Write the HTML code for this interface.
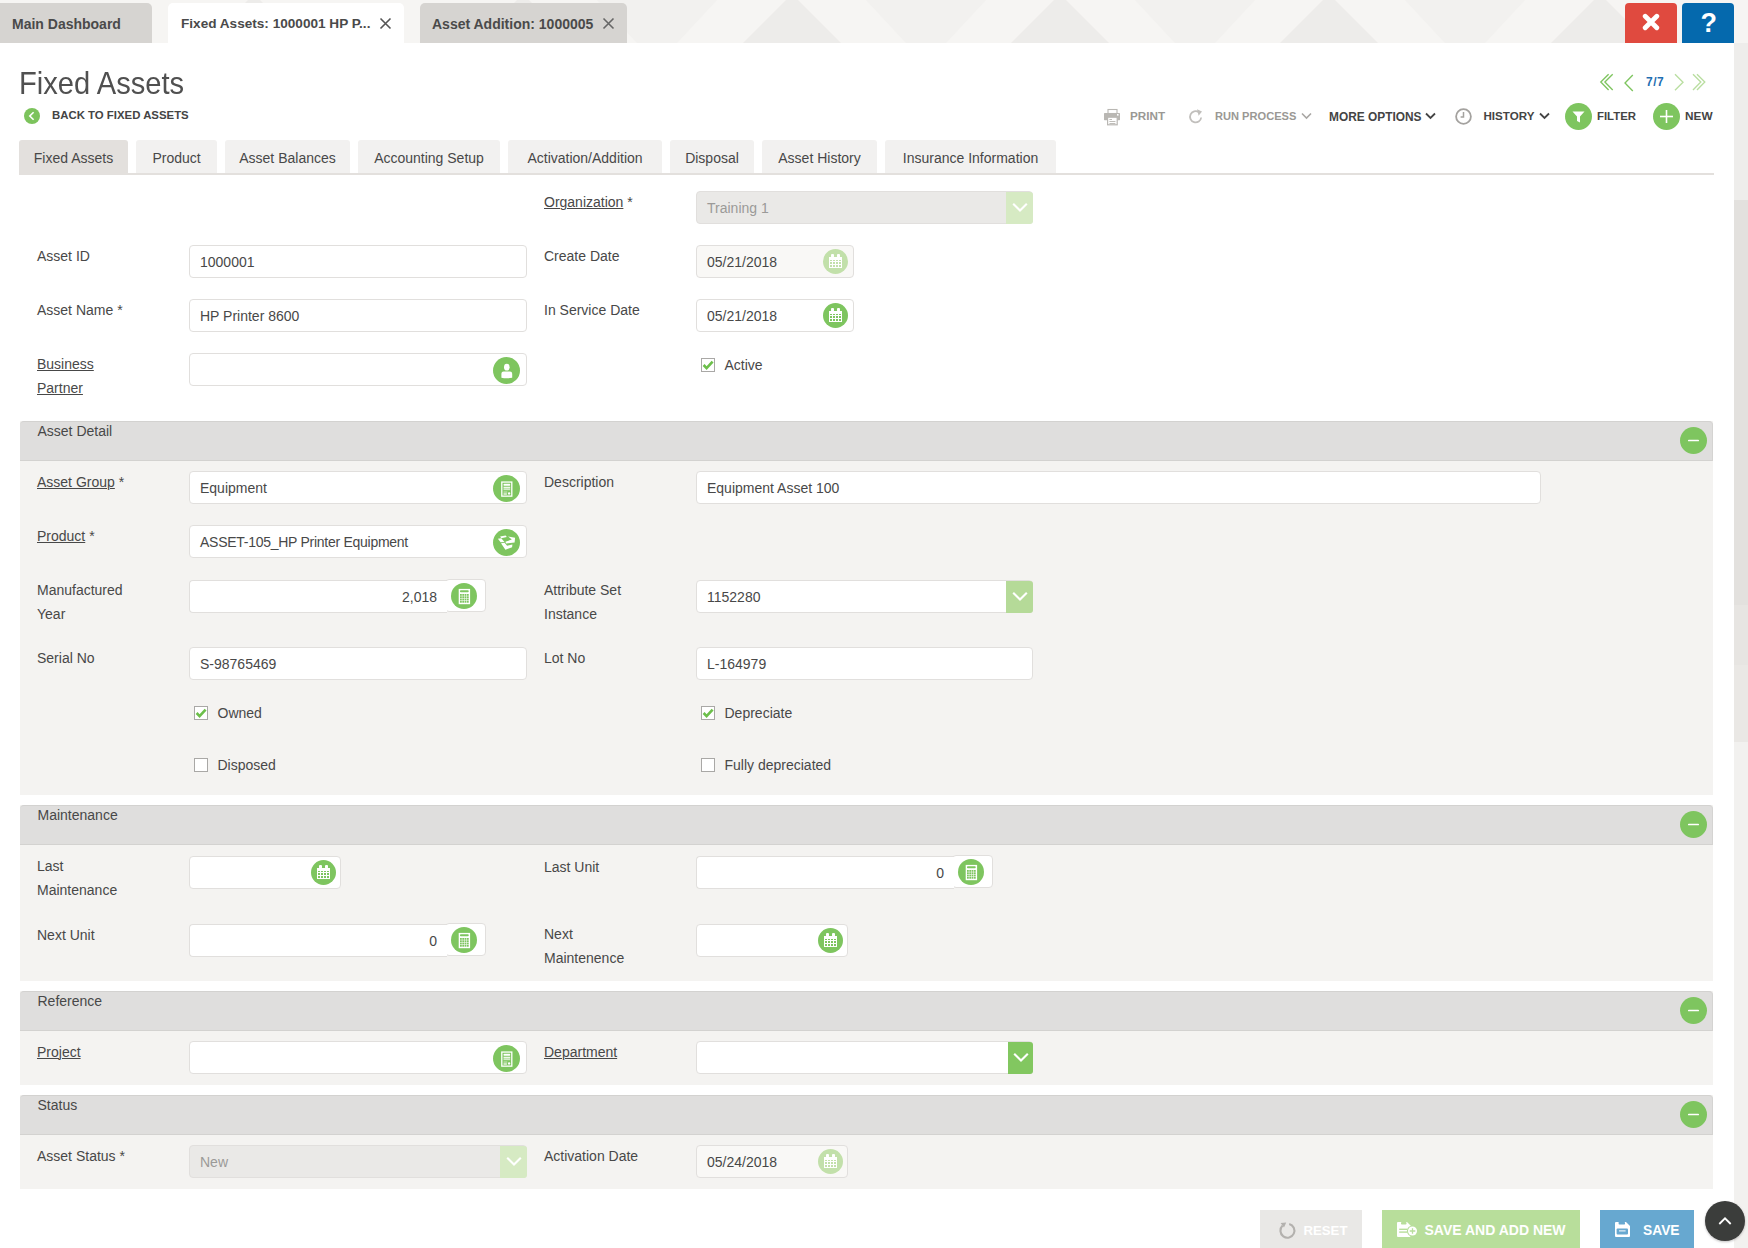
<!DOCTYPE html>
<html><head><meta charset="utf-8">
<style>
*{box-sizing:border-box}
html,body{margin:0;padding:0}
body{width:1748px;height:1248px;overflow:hidden;position:relative;background:#ebe9e6;font-family:"Liberation Sans",sans-serif;color:#484848}
.a{position:absolute}
.t{position:absolute;white-space:nowrap;line-height:1;font-size:14px}
.b{font-weight:bold}
.u{text-decoration:underline;text-underline-offset:1px;text-decoration-thickness:1px}
.inp{position:absolute;height:33px;border:1px solid #e1dfdd;border-radius:4px;background:#fff}
.dis{background:#f9f8f6}
.gbtn{position:absolute;border-radius:50%;background:#7cc35c}
.gbtn svg{position:absolute;left:0;top:0}
.chk{position:absolute;width:14px;height:14px;border:1px solid #a9a8a6;background:#fff}
.sec{position:absolute;left:20px;width:1693px;background:#f4f3f1}
.sech{position:absolute;left:0;top:0;width:100%;height:40px;background:#dfdedd;border-top:1px solid #d3d2d0;border-right:1px solid #d5d4d2;border-bottom:1px solid #d3d2d0;border-radius:4px 4px 0 0}
.tab{position:absolute;top:140px;height:33px;background:#f2f1f0;border-radius:3px 3px 0 0}
</style></head><body>

<!-- top bar -->
<div class="a" style="left:0;top:0;width:1748px;height:43px;background:#f6f5f3;overflow:hidden">
<svg width="1748" height="43" style="position:absolute;left:0;top:0"><g fill="#f2f1ef"><polygon points="597,0 717,0 677,43 637,43"/><polygon points="866,0 986,0 946,43 906,43"/><polygon points="1135,0 1255,0 1215,43 1175,43"/><polygon points="1405,0 1525,0 1485,43 1445,43"/></g><g fill="#edecea"><polygon points="205,43 248,0 260,0 303,43"/><polygon points="474,43 517,0 529,0 572,43"/><polygon points="743,43 786,0 798,0 841,43"/><polygon points="1011,43 1054,0 1066,0 1109,43"/><polygon points="1280,43 1323,0 1335,0 1378,43"/><polygon points="1551,43 1594,0 1606,0 1649,43"/></g></svg>
</div>
<div class="a" style="left:0;top:3px;width:152px;height:40px;background:#d6d4d1;border-radius:0 5px 0 0"></div>
<div class="t b" style="left:12px;top:16.6px;color:#4a4a4a">Main Dashboard</div>
<div class="a" style="left:168px;top:3px;width:236px;height:40px;background:#fff;border-radius:5px 5px 0 0"></div>
<div class="t b" style="left:181px;top:16.6px;font-size:13.6px;color:#4a4a4a">Fixed Assets: 1000001 HP P...</div>
<svg class="a" style="left:379px;top:17px" width="13" height="13"><path d="M1.5 1.5L11.5 11.5M11.5 1.5L1.5 11.5" stroke="#555" stroke-width="1.6"/></svg>
<div class="a" style="left:420px;top:3px;width:207px;height:40px;background:#d6d4d1;border-radius:5px 5px 0 0"></div>
<div class="t b" style="left:432px;top:16.6px;color:#4a4a4a">Asset Addition: 1000005</div>
<svg class="a" style="left:602px;top:17px" width="13" height="13"><path d="M1.5 1.5L11.5 11.5M11.5 1.5L1.5 11.5" stroke="#666" stroke-width="1.6"/></svg>

<div class="a" style="left:1625px;top:3px;width:52px;height:40px;background:#e04a3f;border-radius:4px 4px 0 0"></div>
<svg class="a" style="left:1642px;top:13px" width="18" height="18"><path d="M3.2 3.2L14.8 14.8M14.8 3.2L3.2 14.8" stroke="#fff" stroke-width="4.8" stroke-linecap="round"/></svg>
<div class="a" style="left:1682px;top:3px;width:52px;height:40px;background:#0569ad;border-radius:4px 4px 0 0"></div>
<div class="t b" style="left:1700.5px;top:10px;font-size:27px;color:#fff">?</div>

<!-- right strip -->
<div class="a" style="left:1734px;top:43px;width:14px;height:157px;background:#eeedeb"></div>
<div class="a" style="left:1734px;top:200px;width:14px;height:405px;background:#e3e1de"></div>
<div class="a" style="left:1734px;top:605px;width:14px;height:60px;background:#e7e5e2"></div>
<div class="a" style="left:1734px;top:665px;width:14px;height:77px;background:#eae8e5"></div>
<div class="a" style="left:1734px;top:742px;width:14px;height:506px;background:#f2f1ef"></div>
<!-- white panel -->
<div class="a" style="left:0;top:43px;width:1734px;height:1205px;background:#fff"></div>

<!-- title -->
<div class="t" style="left:19.3px;top:68.2px;font-size:30.5px;color:#505050;transform:scaleX(0.955);transform-origin:0 0">Fixed Assets</div>
<svg class="a" style="left:24px;top:108px" width="16" height="16"><circle cx="8" cy="8" r="8" fill="#7cc35c"/><path d="M9.6 4.2L5.8 8L9.6 11.8" stroke="#fff" stroke-width="1.6" fill="none"/></svg>
<div class="t b" style="left:52px;top:110px;font-size:11.4px;color:#444">BACK TO FIXED ASSETS</div>

<!-- tabs -->
<div class="a" style="left:19px;top:173px;width:1695px;height:2px;background:#e3e0dd"></div>
<div class="tab" style="left:19px;width:109px;height:35px;background:#e3e0dd"></div>
<div class="tab" style="left:136px;width:81px"></div>
<div class="tab" style="left:225px;width:125px"></div>
<div class="tab" style="left:358px;width:142px"></div>
<div class="tab" style="left:508px;width:154px"></div>
<div class="tab" style="left:670px;width:84px"></div>
<div class="tab" style="left:762px;width:115px"></div>
<div class="tab" style="left:885px;width:171px"></div>
<div class="t" style="left:19px;width:109px;text-align:center;top:151.2px">Fixed Assets</div>
<div class="t" style="left:136px;width:81px;text-align:center;top:151.2px">Product</div>
<div class="t" style="left:225px;width:125px;text-align:center;top:151.2px">Asset Balances</div>
<div class="t" style="left:358px;width:142px;text-align:center;top:151.2px">Accounting Setup</div>
<div class="t" style="left:508px;width:154px;text-align:center;top:151.2px">Activation/Addition</div>
<div class="t" style="left:670px;width:84px;text-align:center;top:151.2px">Disposal</div>
<div class="t" style="left:762px;width:115px;text-align:center;top:151.2px">Asset History</div>
<div class="t" style="left:885px;width:171px;text-align:center;top:151.2px">Insurance Information</div>
<svg class="a" style="left:1599px;top:73px" width="110" height="20">
<g fill="none" stroke-width="1.35">
<path d="M9.6 1.3L1.8 9.1L9.6 16.9M13.7 1.3L5.9 9.1L13.7 16.9" stroke="#7ec55f"/>
<path d="M33.8 2L26 10L33.8 18" stroke="#7ec55f"/>
<path d="M76 1.3L84 9.3L76 17.3" stroke="#b9dea0"/>
<path d="M94 1.3L101.8 9.1L94 16.9M98 1.3L105.8 9.1L98 16.9" stroke="#b9dea0"/>
</g></svg>
<div class="t b" style="left:1646px;top:75.54px;font-size:12px;color:#1f6fb2;letter-spacing:0.5px">7/7</div>
<svg class="a" style="left:1103px;top:108px" width="18" height="18"><g fill="#b9b7b3">
<rect x="5" y="1.5" width="9" height="4" fill="none" stroke="#b9b7b3" stroke-width="1.1"/>
<rect x="1" y="5" width="16" height="7.2" rx="0.6"/>
<rect x="14" y="6" width="1.6" height="1.6" fill="#fff"/>
<rect x="4.6" y="9.2" width="9.6" height="7.6" fill="#fff" stroke="#b9b7b3" stroke-width="1.2"/>
<rect x="6.4" y="11" width="2.6" height="0.9"/><rect x="6.4" y="13" width="6" height="0.9"/><rect x="6.4" y="15" width="6" height="0.9"/></g></svg>
<div class="t b" style="left:1130px;top:110.40px;font-size:11.7px;color:#9a9894">PRINT</div>
<svg class="a" style="left:1188px;top:108px" width="16" height="17"><path d="M13.2 9.5A5.6 5.6 0 1 1 10.8 4.2" stroke="#c1bfbc" stroke-width="1.8" fill="none"/><path d="M9 1.2L14 3.6L10.6 7.8Z" fill="#c1bfbc"/></svg>
<div class="t b" style="left:1215px;top:110.90px;font-size:11.1px;color:#9a9894">RUN PROCESS</div>
<svg class="a" style="left:1301px;top:112px" width="11" height="8"><path d="M1 1.5L5.5 6L10 1.5" stroke="#a9a7a4" stroke-width="1.6" fill="none"/></svg>
<div class="t b" style="left:1329px;top:111.53px;font-size:11.9px;color:#444">MORE OPTIONS</div>
<svg class="a" style="left:1425px;top:112px" width="11" height="8"><path d="M1 1.5L5.5 6L10 1.5" stroke="#444" stroke-width="1.8" fill="none"/></svg>
<svg class="a" style="left:1455px;top:108px" width="17" height="17"><circle cx="8.5" cy="8.5" r="7.4" stroke="#a4a29f" stroke-width="1.8" fill="none"/><path d="M8.5 4V9H5.6" stroke="#a4a29f" stroke-width="1.5" fill="none"/></svg>
<div class="t b" style="left:1483.5px;top:110.48px;font-size:11.6px;color:#444">HISTORY</div>
<svg class="a" style="left:1539px;top:112px" width="11" height="8"><path d="M1 1.5L5.5 6L10 1.5" stroke="#444" stroke-width="1.8" fill="none"/></svg>
<svg class="a" style="left:1564.5px;top:102.5px" width="27" height="27"><circle cx="13.5" cy="13.5" r="13.5" fill="#7ec55f"/><path d="M7.5 8.5H19.5L15 13.5V19.5L12 18V13.5Z" fill="#fff"/></svg>
<div class="t b" style="left:1597px;top:110.65px;font-size:11.4px;color:#444">FILTER</div>
<svg class="a" style="left:1652.5px;top:102.5px" width="27" height="27"><circle cx="13.5" cy="13.5" r="13.5" fill="#7ec55f"/><rect x="7" y="12.7" width="13" height="1.6" fill="#fff"/><rect x="12.7" y="7" width="1.6" height="13" fill="#fff"/></svg>
<div class="t b" style="left:1685px;top:111.21px;font-size:11.8px;color:#444">NEW</div>
<div class="t" style="left:544px;top:195.15px"><span class="u">Organization</span> *</div>
<div class="inp" style="left:696px;top:191px;width:337px;height:33px;background:#eae9e7"></div>
<div class="t" style="left:707px;top:201.15px;color:#9b9a98">Training 1</div>
<div class="a" style="left:1006px;top:191.5px;width:27px;height:32.5px;background:#d6eac3;border-radius:0 3px 3px 0"></div>
<svg class="a" style="left:1011.5px;top:201.8px" width="16" height="12"><path d="M1.2 1.8L8 8.6L14.8 1.8" stroke="#fff" stroke-width="2.1" fill="none"/></svg>
<div class="t" style="left:37px;top:249.15px">Asset ID</div>
<div class="inp" style="left:189px;top:245px;width:338px;height:33px"></div>
<div class="t" style="left:200px;top:255.15px">1000001</div>
<div class="t" style="left:544px;top:249.15px">Create Date</div>
<div class="inp" style="left:696px;top:245px;width:158px;height:33px;background:#f9f8f6"></div>
<div class="t" style="left:707px;top:255.15px">05/21/2018</div>
<svg class="a" style="left:823.00px;top:249.00px" width="25" height="25" viewBox="-12.5 -12.5 25 25"><circle cx="0" cy="0" r="12.5" fill="#c2e0aa"/><rect x="-6.5" y="-4.5" width="13" height="11" fill="#fff"/><rect x="-4.5" y="-7.5" width="3" height="3.6" rx="1" fill="#fff"/><rect x="1.5" y="-7.5" width="3" height="3.6" rx="1" fill="#fff"/><g fill="#c2e0aa"><rect x="-5.5" y="-1.5" width="2" height="1"/><rect x="-5.5" y="0.5" width="2" height="2"/><rect x="-5.5" y="3.5" width="2" height="2"/><rect x="-2.5" y="-1.5" width="2" height="1"/><rect x="-2.5" y="0.5" width="2" height="2"/><rect x="-2.5" y="3.5" width="2" height="2"/><rect x="0.5" y="-1.5" width="2" height="1"/><rect x="0.5" y="0.5" width="2" height="2"/><rect x="0.5" y="3.5" width="2" height="2"/><rect x="3.5" y="-1.5" width="2" height="1"/><rect x="3.5" y="0.5" width="2" height="2"/><rect x="3.5" y="3.5" width="2" height="2"/></g></svg>
<div class="t" style="left:37px;top:303.15px">Asset Name *</div>
<div class="inp" style="left:189px;top:299px;width:338px;height:33px"></div>
<div class="t" style="left:200px;top:309.15px">HP Printer 8600</div>
<div class="t" style="left:544px;top:303.15px">In Service Date</div>
<div class="inp" style="left:696px;top:299px;width:158px;height:33px"></div>
<div class="t" style="left:707px;top:309.15px">05/21/2018</div>
<svg class="a" style="left:823.00px;top:303.00px" width="25" height="25" viewBox="-12.5 -12.5 25 25"><circle cx="0" cy="0" r="12.5" fill="#7ec55f"/><rect x="-6.5" y="-4.5" width="13" height="11" fill="#fff"/><rect x="-4.5" y="-7.5" width="3" height="3.6" rx="1" fill="#fff"/><rect x="1.5" y="-7.5" width="3" height="3.6" rx="1" fill="#fff"/><g fill="#7ec55f"><rect x="-5.5" y="-1.5" width="2" height="1"/><rect x="-5.5" y="0.5" width="2" height="2"/><rect x="-5.5" y="3.5" width="2" height="2"/><rect x="-2.5" y="-1.5" width="2" height="1"/><rect x="-2.5" y="0.5" width="2" height="2"/><rect x="-2.5" y="3.5" width="2" height="2"/><rect x="0.5" y="-1.5" width="2" height="1"/><rect x="0.5" y="0.5" width="2" height="2"/><rect x="0.5" y="3.5" width="2" height="2"/><rect x="3.5" y="-1.5" width="2" height="1"/><rect x="3.5" y="0.5" width="2" height="2"/><rect x="3.5" y="3.5" width="2" height="2"/></g></svg>
<div class="t u" style="left:37px;top:357.35px">Business</div>
<div class="t u" style="left:37px;top:381.35px">Partner</div>
<div class="inp" style="left:189px;top:353px;width:338px;height:33px"></div>
<svg class="a" style="left:492.70px;top:356.70px" width="27" height="27" viewBox="-13.5 -13.5 27 27"><circle cx="0" cy="0" r="13.5" fill="#7ec55f"/><g fill="#fff"><ellipse cx="0.3" cy="-3.3" rx="2.8" ry="3.35"/><path d="M-5.1 7.3V3.2Q-5.1 0.95 -2.9 0.95H3.5Q5.7 0.95 5.7 3.2V7.3Q0.3 8.4 -5.1 7.3Z"/></g></svg>
<div class="chk" style="left:701px;top:358px"></div>
<svg class="a" style="left:702px;top:359px" width="12" height="12"><path d="M1.6 6L4.6 9.2L10.6 2.6" stroke="#6cbf4a" stroke-width="2.6" fill="none"/></svg>
<div class="t" style="left:724.5px;top:358.15px">Active</div>
<div class="sec" style="top:421px;height:374px"><div class="sech"></div></div>
<div class="t" style="left:37.5px;top:424.15px">Asset Detail</div>
<svg class="a" style="left:1680px;top:427px" width="27" height="27"><circle cx="13.5" cy="13.5" r="13.5" fill="#7ec55f"/><path d="M8.8 13.5H18.2" stroke="#fff" stroke-width="1.7" stroke-linecap="round"/></svg>
<div class="t" style="left:37px;top:475.15px"><span class="u">Asset Group</span> *</div>
<div class="inp" style="left:189px;top:471px;width:338px;height:33px"></div>
<div class="t" style="left:200px;top:481.15px">Equipment</div>
<svg class="a" style="left:492.70px;top:474.70px" width="27" height="27" viewBox="-13.5 -13.5 27 27"><circle cx="0" cy="0" r="13.5" fill="#7ec55f"/><rect x="-4.7" y="-6.45" width="10" height="14.1" fill="none" stroke="#fff" stroke-width="1.3"/><g fill="#fff"><rect x="-3" y="-4.65" width="6.7" height="1.8" rx="0.6"/><rect x="-3" y="-1.75" width="6.7" height="1.1"/><rect x="-3" y="-0.3" width="6.7" height="2" opacity="0.65"/><rect x="-3" y="3.0" width="3.8" height="1.1" opacity="0.6"/><rect x="-3" y="4.9" width="3.4" height="1.2"/><circle cx="2.6" cy="4.9" r="1.2"/></g></svg>
<div class="t" style="left:544px;top:475.15px">Description</div>
<div class="inp" style="left:696px;top:471px;width:845px;height:33px"></div>
<div class="t" style="left:707px;top:481.15px">Equipment Asset 100</div>
<div class="t" style="left:37px;top:529.15px"><span class="u">Product</span> *</div>
<div class="inp" style="left:189px;top:525px;width:338px;height:33px"></div>
<div class="t" style="left:200px;top:535.15px;letter-spacing:-0.27px">ASSET-105_HP Printer Equipment</div>
<svg class="a" style="left:492.70px;top:528.70px" width="27" height="27" viewBox="-13.5 -13.5 27 27"><circle cx="0" cy="0" r="13.5" fill="#7ec55f"/><polygon fill="#fff" points="-6.4,-6.1 -0.9,-7.1 0.3,-5.4 -5.3,-4.2"/><polygon fill="#fff" points="1.6,-6.0 8.6,-4.8 8.1,0.0 -0.4,0.9 -1.1,-0.8 5.3,-2.9"/><polygon fill="#fff" points="-8.6,-3.8 -5.3,-4.2 -2.0,-0.6 -5.9,-0.2"/><polygon fill="#fff" points="-5.5,0.8 -1.9,0.3 0.6,3.2 5.9,1.9 5.6,4.8 -1.1,7.3"/></svg>
<div class="t" style="left:37px;top:583.35px">Manufactured</div>
<div class="t" style="left:37px;top:607.35px">Year</div>
<div class="inp" style="left:445px;top:579px;width:41px;height:33px"></div>
<div class="inp" style="left:189px;top:580px;width:258px;height:33px;border-right:none;border-radius:4px 0 0 4px"></div>
<div class="t" style="left:189px;top:590.15px;width:248px;text-align:right">2,018</div>
<svg class="a" style="left:451.00px;top:583.00px" width="26" height="26" viewBox="-13.0 -13.0 26 26"><circle cx="0" cy="0" r="13.0" fill="#7ec55f"/><rect x="-5.3" y="-7.1" width="11.4" height="15.3" fill="#fff"/><rect x="-4" y="-5.8" width="8.7" height="2" rx="0.8" fill="#7ec55f"/><g fill="#7ec55f"><rect x="-4" y="-2" width="1.8" height="1.8"/><rect x="-4" y="0.3" width="1.8" height="1.8"/><rect x="-4" y="2.6" width="1.8" height="1.8"/><rect x="-4" y="4.9" width="1.8" height="1.8"/><rect x="-1.7" y="-2" width="1.8" height="1.8"/><rect x="-1.7" y="0.3" width="1.8" height="1.8"/><rect x="-1.7" y="2.6" width="1.8" height="1.8"/><rect x="-1.7" y="4.9" width="1.8" height="1.8"/><rect x="0.6" y="-2" width="1.8" height="1.8"/><rect x="0.6" y="0.3" width="1.8" height="1.8"/><rect x="0.6" y="2.6" width="1.8" height="1.8"/><rect x="0.6" y="4.9" width="1.8" height="1.8"/><rect x="2.9" y="-2" width="1.8" height="1.8"/><rect x="2.9" y="0.3" width="1.8" height="1.8"/><rect x="2.9" y="2.6" width="1.8" height="1.8"/><rect x="2.9" y="4.9" width="1.8" height="1.8"/></g></svg>
<div class="t" style="left:544px;top:583.35px">Attribute Set</div>
<div class="t" style="left:544px;top:607.35px">Instance</div>
<div class="inp" style="left:696px;top:580px;width:337px;height:33px"></div>
<div class="t" style="left:707px;top:590.15px">1152280</div>
<div class="a" style="left:1006px;top:580.5px;width:27px;height:32.5px;background:#b5da98;border-radius:0 3px 3px 0"></div>
<svg class="a" style="left:1011.5px;top:590.8px" width="16" height="12"><path d="M1.2 1.8L8 8.6L14.8 1.8" stroke="#fff" stroke-width="2.1" fill="none"/></svg>
<div class="t" style="left:37px;top:651.15px">Serial No</div>
<div class="inp" style="left:189px;top:647px;width:338px;height:33px"></div>
<div class="t" style="left:200px;top:657.15px">S-98765469</div>
<div class="t" style="left:544px;top:651.15px">Lot No</div>
<div class="inp" style="left:696px;top:647px;width:337px;height:33px"></div>
<div class="t" style="left:707px;top:657.15px">L-164979</div>
<div class="chk" style="left:194px;top:706px"></div>
<svg class="a" style="left:195px;top:707px" width="12" height="12"><path d="M1.6 6L4.6 9.2L10.6 2.6" stroke="#6cbf4a" stroke-width="2.6" fill="none"/></svg>
<div class="t" style="left:217.5px;top:706.15px">Owned</div>
<div class="chk" style="left:701px;top:706px"></div>
<svg class="a" style="left:702px;top:707px" width="12" height="12"><path d="M1.6 6L4.6 9.2L10.6 2.6" stroke="#6cbf4a" stroke-width="2.6" fill="none"/></svg>
<div class="t" style="left:724.5px;top:706.15px">Depreciate</div>
<div class="chk" style="left:194px;top:758px"></div>
<div class="t" style="left:217.5px;top:758.15px">Disposed</div>
<div class="chk" style="left:701px;top:758px"></div>
<div class="t" style="left:724.5px;top:758.15px">Fully depreciated</div>
<div class="sec" style="top:805px;height:176px"><div class="sech"></div></div>
<div class="t" style="left:37.5px;top:808.15px">Maintenance</div>
<svg class="a" style="left:1680px;top:811px" width="27" height="27"><circle cx="13.5" cy="13.5" r="13.5" fill="#7ec55f"/><path d="M8.8 13.5H18.2" stroke="#fff" stroke-width="1.7" stroke-linecap="round"/></svg>
<div class="t" style="left:37px;top:859.35px">Last</div>
<div class="t" style="left:37px;top:883.35px">Maintenance</div>
<div class="inp" style="left:189px;top:856px;width:152px;height:33px"></div>
<svg class="a" style="left:311.00px;top:860.00px" width="25" height="25" viewBox="-12.5 -12.5 25 25"><circle cx="0" cy="0" r="12.5" fill="#7ec55f"/><rect x="-6.5" y="-4.5" width="13" height="11" fill="#fff"/><rect x="-4.5" y="-7.5" width="3" height="3.6" rx="1" fill="#fff"/><rect x="1.5" y="-7.5" width="3" height="3.6" rx="1" fill="#fff"/><g fill="#7ec55f"><rect x="-5.5" y="-1.5" width="2" height="1"/><rect x="-5.5" y="0.5" width="2" height="2"/><rect x="-5.5" y="3.5" width="2" height="2"/><rect x="-2.5" y="-1.5" width="2" height="1"/><rect x="-2.5" y="0.5" width="2" height="2"/><rect x="-2.5" y="3.5" width="2" height="2"/><rect x="0.5" y="-1.5" width="2" height="1"/><rect x="0.5" y="0.5" width="2" height="2"/><rect x="0.5" y="3.5" width="2" height="2"/><rect x="3.5" y="-1.5" width="2" height="1"/><rect x="3.5" y="0.5" width="2" height="2"/><rect x="3.5" y="3.5" width="2" height="2"/></g></svg>
<div class="t" style="left:544px;top:860.15px">Last Unit</div>
<div class="inp" style="left:952px;top:855px;width:41px;height:33px"></div>
<div class="inp" style="left:696px;top:856px;width:258px;height:33px;border-right:none;border-radius:4px 0 0 4px"></div>
<div class="t" style="left:696px;top:866.15px;width:248px;text-align:right">0</div>
<svg class="a" style="left:958.00px;top:859.00px" width="26" height="26" viewBox="-13.0 -13.0 26 26"><circle cx="0" cy="0" r="13.0" fill="#7ec55f"/><rect x="-5.3" y="-7.1" width="11.4" height="15.3" fill="#fff"/><rect x="-4" y="-5.8" width="8.7" height="2" rx="0.8" fill="#7ec55f"/><g fill="#7ec55f"><rect x="-4" y="-2" width="1.8" height="1.8"/><rect x="-4" y="0.3" width="1.8" height="1.8"/><rect x="-4" y="2.6" width="1.8" height="1.8"/><rect x="-4" y="4.9" width="1.8" height="1.8"/><rect x="-1.7" y="-2" width="1.8" height="1.8"/><rect x="-1.7" y="0.3" width="1.8" height="1.8"/><rect x="-1.7" y="2.6" width="1.8" height="1.8"/><rect x="-1.7" y="4.9" width="1.8" height="1.8"/><rect x="0.6" y="-2" width="1.8" height="1.8"/><rect x="0.6" y="0.3" width="1.8" height="1.8"/><rect x="0.6" y="2.6" width="1.8" height="1.8"/><rect x="0.6" y="4.9" width="1.8" height="1.8"/><rect x="2.9" y="-2" width="1.8" height="1.8"/><rect x="2.9" y="0.3" width="1.8" height="1.8"/><rect x="2.9" y="2.6" width="1.8" height="1.8"/><rect x="2.9" y="4.9" width="1.8" height="1.8"/></g></svg>
<div class="t" style="left:37px;top:928.15px">Next Unit</div>
<div class="inp" style="left:445px;top:923px;width:41px;height:33px"></div>
<div class="inp" style="left:189px;top:924px;width:258px;height:33px;border-right:none;border-radius:4px 0 0 4px"></div>
<div class="t" style="left:189px;top:934.15px;width:248px;text-align:right">0</div>
<svg class="a" style="left:451.00px;top:927.00px" width="26" height="26" viewBox="-13.0 -13.0 26 26"><circle cx="0" cy="0" r="13.0" fill="#7ec55f"/><rect x="-5.3" y="-7.1" width="11.4" height="15.3" fill="#fff"/><rect x="-4" y="-5.8" width="8.7" height="2" rx="0.8" fill="#7ec55f"/><g fill="#7ec55f"><rect x="-4" y="-2" width="1.8" height="1.8"/><rect x="-4" y="0.3" width="1.8" height="1.8"/><rect x="-4" y="2.6" width="1.8" height="1.8"/><rect x="-4" y="4.9" width="1.8" height="1.8"/><rect x="-1.7" y="-2" width="1.8" height="1.8"/><rect x="-1.7" y="0.3" width="1.8" height="1.8"/><rect x="-1.7" y="2.6" width="1.8" height="1.8"/><rect x="-1.7" y="4.9" width="1.8" height="1.8"/><rect x="0.6" y="-2" width="1.8" height="1.8"/><rect x="0.6" y="0.3" width="1.8" height="1.8"/><rect x="0.6" y="2.6" width="1.8" height="1.8"/><rect x="0.6" y="4.9" width="1.8" height="1.8"/><rect x="2.9" y="-2" width="1.8" height="1.8"/><rect x="2.9" y="0.3" width="1.8" height="1.8"/><rect x="2.9" y="2.6" width="1.8" height="1.8"/><rect x="2.9" y="4.9" width="1.8" height="1.8"/></g></svg>
<div class="t" style="left:544px;top:927.35px">Next</div>
<div class="t" style="left:544px;top:951.35px">Maintenence</div>
<div class="inp" style="left:696px;top:924px;width:152px;height:33px"></div>
<svg class="a" style="left:818.00px;top:928.00px" width="25" height="25" viewBox="-12.5 -12.5 25 25"><circle cx="0" cy="0" r="12.5" fill="#7ec55f"/><rect x="-6.5" y="-4.5" width="13" height="11" fill="#fff"/><rect x="-4.5" y="-7.5" width="3" height="3.6" rx="1" fill="#fff"/><rect x="1.5" y="-7.5" width="3" height="3.6" rx="1" fill="#fff"/><g fill="#7ec55f"><rect x="-5.5" y="-1.5" width="2" height="1"/><rect x="-5.5" y="0.5" width="2" height="2"/><rect x="-5.5" y="3.5" width="2" height="2"/><rect x="-2.5" y="-1.5" width="2" height="1"/><rect x="-2.5" y="0.5" width="2" height="2"/><rect x="-2.5" y="3.5" width="2" height="2"/><rect x="0.5" y="-1.5" width="2" height="1"/><rect x="0.5" y="0.5" width="2" height="2"/><rect x="0.5" y="3.5" width="2" height="2"/><rect x="3.5" y="-1.5" width="2" height="1"/><rect x="3.5" y="0.5" width="2" height="2"/><rect x="3.5" y="3.5" width="2" height="2"/></g></svg>
<div class="sec" style="top:991px;height:94px"><div class="sech"></div></div>
<div class="t" style="left:37.5px;top:994.15px">Reference</div>
<svg class="a" style="left:1680px;top:997px" width="27" height="27"><circle cx="13.5" cy="13.5" r="13.5" fill="#7ec55f"/><path d="M8.8 13.5H18.2" stroke="#fff" stroke-width="1.7" stroke-linecap="round"/></svg>
<div class="t" style="left:37px;top:1045.15px"><span class="u">Project</span></div>
<div class="inp" style="left:189px;top:1041px;width:338px;height:33px"></div>
<svg class="a" style="left:492.70px;top:1044.70px" width="27" height="27" viewBox="-13.5 -13.5 27 27"><circle cx="0" cy="0" r="13.5" fill="#7ec55f"/><rect x="-4.7" y="-6.45" width="10" height="14.1" fill="none" stroke="#fff" stroke-width="1.3"/><g fill="#fff"><rect x="-3" y="-4.65" width="6.7" height="1.8" rx="0.6"/><rect x="-3" y="-1.75" width="6.7" height="1.1"/><rect x="-3" y="-0.3" width="6.7" height="2" opacity="0.65"/><rect x="-3" y="3.0" width="3.8" height="1.1" opacity="0.6"/><rect x="-3" y="4.9" width="3.4" height="1.2"/><circle cx="2.6" cy="4.9" r="1.2"/></g></svg>
<div class="t" style="left:544px;top:1045.15px"><span class="u">Department</span></div>
<div class="inp" style="left:696px;top:1041px;width:337px;height:33px"></div>
<div class="a" style="left:1008px;top:1041.5px;width:25px;height:32.5px;background:#82c760;border-radius:0 3px 3px 0"></div>
<svg class="a" style="left:1012.5px;top:1051.8px" width="16" height="12"><path d="M1.2 1.8L8 8.6L14.8 1.8" stroke="#fff" stroke-width="2.1" fill="none"/></svg>
<div class="sec" style="top:1095px;height:94px"><div class="sech"></div></div>
<div class="t" style="left:37.5px;top:1098.15px">Status</div>
<svg class="a" style="left:1680px;top:1101px" width="27" height="27"><circle cx="13.5" cy="13.5" r="13.5" fill="#7ec55f"/><path d="M8.8 13.5H18.2" stroke="#fff" stroke-width="1.7" stroke-linecap="round"/></svg>
<div class="t" style="left:37px;top:1149.15px">Asset Status *</div>
<div class="inp" style="left:189px;top:1145px;width:338px;height:33px;background:#eae9e7"></div>
<div class="t" style="left:200px;top:1155.15px;color:#9b9a98">New</div>
<div class="a" style="left:500px;top:1145.5px;width:27px;height:32.5px;background:#d6eac3;border-radius:0 3px 3px 0"></div>
<svg class="a" style="left:505.5px;top:1155.8px" width="16" height="12"><path d="M1.2 1.8L8 8.6L14.8 1.8" stroke="#fff" stroke-width="2.1" fill="none"/></svg>
<div class="t" style="left:544px;top:1149.15px">Activation Date</div>
<div class="inp" style="left:696px;top:1145px;width:152px;height:33px;background:#f9f8f6"></div>
<div class="t" style="left:707px;top:1155.15px">05/24/2018</div>
<svg class="a" style="left:818.00px;top:1149.00px" width="25" height="25" viewBox="-12.5 -12.5 25 25"><circle cx="0" cy="0" r="12.5" fill="#c2e0aa"/><rect x="-6.5" y="-4.5" width="13" height="11" fill="#fff"/><rect x="-4.5" y="-7.5" width="3" height="3.6" rx="1" fill="#fff"/><rect x="1.5" y="-7.5" width="3" height="3.6" rx="1" fill="#fff"/><g fill="#c2e0aa"><rect x="-5.5" y="-1.5" width="2" height="1"/><rect x="-5.5" y="0.5" width="2" height="2"/><rect x="-5.5" y="3.5" width="2" height="2"/><rect x="-2.5" y="-1.5" width="2" height="1"/><rect x="-2.5" y="0.5" width="2" height="2"/><rect x="-2.5" y="3.5" width="2" height="2"/><rect x="0.5" y="-1.5" width="2" height="1"/><rect x="0.5" y="0.5" width="2" height="2"/><rect x="0.5" y="3.5" width="2" height="2"/><rect x="3.5" y="-1.5" width="2" height="1"/><rect x="3.5" y="0.5" width="2" height="2"/><rect x="3.5" y="3.5" width="2" height="2"/></g></svg>
<div class="a" style="left:1260px;top:1210px;width:102px;height:40px;background:#e9e8e6"></div>
<svg class="a" style="left:1278px;top:1221px" width="20" height="20"><path d="M4.6 4.6A7 7 0 1 0 11.2 2.9" stroke="#b3b1ae" stroke-width="2.1" fill="none"/><path d="M2.6 2L8.2 1.4L6 6.6Z" fill="#b3b1ae"/></svg>
<div class="t b" style="left:1303.5px;top:1223.83px;font-size:13.2px;color:#fff">RESET</div>
<div class="a" style="left:1382px;top:1210px;width:198px;height:40px;background:#b8de9b"></div>
<svg class="a" style="left:1396px;top:1221px" width="24" height="18">
<path d="M1 2Q1 1 2 1H11L14.5 4.5V15Q14.5 16 13.5 16H2Q1 16 1 15Z" fill="#fff"/>
<rect x="5" y="1" width="5.5" height="2.6" rx="0.8" fill="#b8de9b"/>
<rect x="3.2" y="7.6" width="8" height="1.4" fill="#b8de9b"/><rect x="3.2" y="10.4" width="8" height="1.4" fill="#b8de9b"/>
<circle cx="16.5" cy="10" r="5.6" fill="#b8de9b"/><circle cx="16.5" cy="10" r="4.5" fill="#fff"/>
<path d="M16.5 7.2V12.8M13.7 10H19.3" stroke="#b8de9b" stroke-width="1.3"/></svg>
<div class="t b" style="left:1424.5px;top:1223.15px;color:#fff">SAVE AND ADD NEW</div>
<div class="a" style="left:1600px;top:1210px;width:94px;height:40px;background:#67a8d0"></div>
<svg class="a" style="left:1614px;top:1221px" width="17" height="17">
<path d="M1 2Q1 1 2 1H12L16 5V15Q16 16 15 16H2Q1 16 1 15Z" fill="#fff"/>
<rect x="4.6" y="1" width="6.4" height="2.4" rx="0.6" fill="#67a8d0"/>
<rect x="2.6" y="7.4" width="11.4" height="6" rx="1" fill="#67a8d0"/>
<rect x="5" y="9.4" width="6.6" height="1" fill="#fff"/></svg>
<div class="t b" style="left:1643px;top:1224.32px;font-size:13.8px;color:#fff">SAVE</div>
<svg class="a" style="left:1702px;top:1198px" width="46" height="46"><defs><filter id="sh" x="-30%" y="-30%" width="160%" height="160%"><feDropShadow dx="0" dy="1" stdDeviation="1.2" flood-color="#000" flood-opacity="0.25"/></filter></defs><circle cx="23" cy="23" r="20" fill="#3b3c3b" filter="url(#sh)"/><path d="M17.3 26L23 20.3L28.7 26" stroke="#fff" stroke-width="1.8" fill="none"/></svg>

</body></html>
